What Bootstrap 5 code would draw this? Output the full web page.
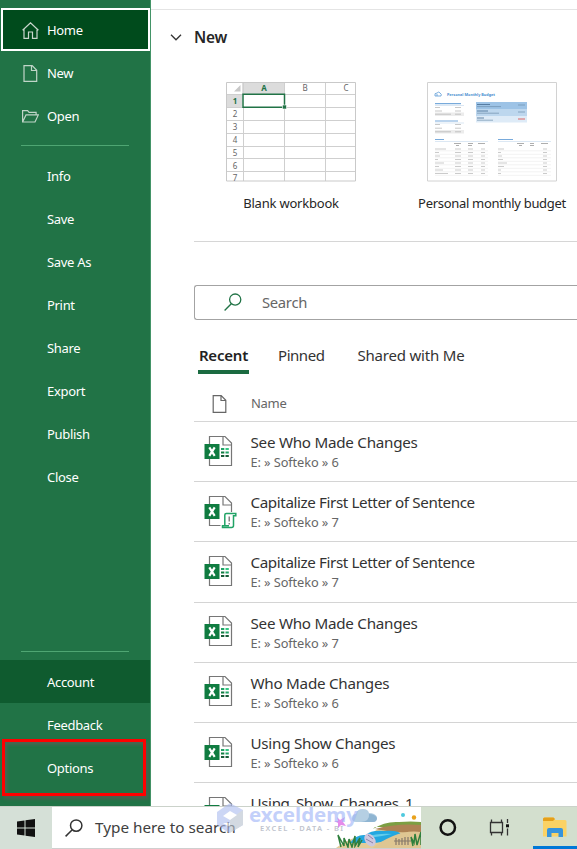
<!DOCTYPE html>
<html lang="en">
<head>
<meta charset="utf-8">
<meta name="viewport" content="width=device-width, initial-scale=1">
<title>Excel</title>
<link href="https://cdn.jsdelivr.net/npm/bootstrap@5.3.0/dist/css/bootstrap.min.css" rel="stylesheet">
<style>
body{font-family:"Noto Sans","Open Sans",sans-serif;color:#262626;height:849px;background:#fff}
.work{height:806px}
.side{width:151px;background:#217346;border-right:1px solid #439467;padding-top:8px;font-size:13px;letter-spacing:-.32px}
.side a{height:43px;color:#fff;text-decoration:none;padding:1px 0 0 22px}
.side .ico{width:17px;height:17px;margin:-1px 8px 0 0;flex:none}
.side a.home{background:#004b1c;border:2px solid #fff;margin-left:1px;padding-left:19px}
.side a.top{padding-top:2px}
.side a.sub{padding-left:47px}
.side a.low{padding-top:2px}
.side .last{margin-bottom:17px}
.rule{height:1px;margin:8px 21px;background:#4fa673;flex:none}
.rule.upper{margin-top:8px;margin-bottom:9px}
.side a.acct{background:#0f5b2f}
.callout{left:2px;top:739px;width:144px;height:57px;border:3px solid #f00;box-shadow:2px 3px 3px #4a5f50,inset 2px 3px 3px #4a6552;pointer-events:none}
.main{border-top:1px solid transparent;padding-left:43px}
.topline{height:1px;margin:8px 0 0 -43px;background:#e4e4e4}
.newhead{height:26px;margin:15px 0 0 -24px;font-size:15.4px;font-weight:600;letter-spacing:-.2px}
.newhead svg{margin:-2px 12px 0 0}
.tiles{margin-top:31px;padding-left:14px;height:160px;border-bottom:1px solid #d6d6d6}
.tile{width:202px;text-align:center;font-size:13px;letter-spacing:-.31px;white-space:nowrap;flex:none}
.tile.one{width:166px;margin-right:17px;letter-spacing:-.2px}
.tile .thumb{display:block;margin:0 auto}
.tile span{display:block;margin-top:12px;line-height:18px}
.find{height:35px;margin-top:43px;border:1px solid #a3a3a3;border-right:0;border-radius:3px 0 0 3px;padding-left:29px;font-size:14.8px;letter-spacing:-.3px;color:#666}
.find svg{margin:-2px 20px 0 0}
.tabs{margin-top:23px;height:31px;font-size:15px;line-height:25px;padding-left:4px;color:#333;letter-spacing:-.2px;white-space:nowrap}
.tabs .cur{font-weight:600;color:#222;border-bottom:4px solid #1b6b41;width:51px;text-align:center}
.t4{margin-left:29px;letter-spacing:-.45px}
.t5{margin-left:33px}
.namerow{height:48px;border-bottom:1px solid #d6d6d6;padding:13px 0 0 18px;font-size:13px;letter-spacing:-.3px;color:#666}
.namerow span{margin-left:24px}
.frow{height:60.2px;border-bottom:1px solid #d4d4d4;padding-left:10px;flex:none;white-space:nowrap}
.frow svg{flex:none;margin-right:12.500px}
.fname{font-size:15.2px;line-height:20px;color:#333;letter-spacing:-.26px;margin-top:1px}
.fname.tight{letter-spacing:-.39px}
.fpath{font-size:12.800px;line-height:20px;color:#666;letter-spacing:-.1px}
.bar{height:43px;background:#d3dfce;border-top:1px solid #cbd2ca}
.start{width:52px;background:#d5e0d7}
.tsearch{width:369px;background:#fff;font-size:15.3px;color:#404040;padding-left:13px;border-bottom:1px solid #cfcfcf;white-space:nowrap}
.t7{margin-left:12px}
.art{right:0;bottom:0}
.wm{left:216px;top:803px}
svg text{font-family:"Noto Sans",sans-serif;letter-spacing:0}
</style>
</head>
<body class="overflow-hidden position-relative">
<svg width="0" height="0" class="position-absolute">
<defs>
<symbol id="page" viewBox="0 0 14 18"><path d="M.7.700h8l4.600 4.600v12H.7zM8.500.7v4.800h4.800" fill="none" stroke="#666" stroke-width="1.200"/></symbol>
<symbol id="xl" viewBox="0 0 34 34"><path d="M5.500 1.500h15.500l6.500 6.500v22.500h-22z" fill="#fff" stroke="#767676" stroke-width="1.200"/><path d="M19 1.500v8.500h8.500" fill="none" stroke="#767676" stroke-width="1.200"/><path fill="#107c41" d="M.5 9h15v15H.5z"/><path d="M5.300 12.300l5.400 8.600M10.700 12.300l-5.400 8.600" stroke="#fff" stroke-width="2.200"/></symbol>
<symbol id="cells" viewBox="0 0 34 34"><path d="M17 13h3.300v2h-3.300z" fill="#21a366"/><path d="M21.500 13h3.300v2h-3.300z" fill="#33c481"/><path d="M17 16.500h3.300v2h-3.300z" fill="#107c41"/><path d="M21.500 16.500h3.300v2h-3.300z" fill="#21a366"/><path d="M17 20h3.300v2h-3.300zM21.500 20h3.300v2h-3.300z" fill="#185c37"/></symbol>
<symbol id="script" viewBox="0 0 34 34"><path d="M16.500 17h16.500v17H16.500z" fill="#fff"/><path d="M20.800 31V20q0-1.500 1.500-1.500h9.500v2.300h-2.300V30.500q0 2-2 2h-9v-1.700h6.500" fill="#fff" stroke="#21a366" stroke-width="1.500"/><path d="M25.200 21.500v5M25.200 28v1.500" stroke="#666" stroke-width="1.200"/></symbol>
</defs>
</svg>

<div class="work d-flex overflow-hidden">
<nav class="side d-flex flex-column flex-shrink-0">
<a href="#" class="home top d-flex align-items-center"><svg class="ico" viewBox="0 0 17 17" fill="none" stroke="#c9d6cd" stroke-width="1.200"><path d="M.6 8.300L8.500.8l7.900 7.500M2 7v9.300h4.500V10h4v6.300H15V7"/></svg>Home</a>
<a href="#" class="top d-flex align-items-center"><svg class="ico" viewBox="0 0 17 17" fill="none" stroke="#c0d5c8" stroke-width="1.200"><path d="M2 .6h8.200l4.500 4.700v11.100H2zM9.500.6v4.900h5"/></svg>New</a>
<a href="#" class="top d-flex align-items-center"><svg class="ico" viewBox="0 0 17 17" fill="none" stroke="#c0d5c8" stroke-width="1.200"><path d="M.6 14V2.600h5l1.500 1.700h7v2.600M.6 14L4 6.900h12.300L13 14z"/></svg>Open</a>
<div class="rule upper"></div>
<a href="#" class="sub d-flex align-items-center"><span>Info</span></a>
<a href="#" class="sub d-flex align-items-center"><span>Save</span></a>
<a href="#" class="sub d-flex align-items-center"><span>Save As</span></a>
<a href="#" class="sub d-flex align-items-center"><span>Print</span></a>
<a href="#" class="sub d-flex align-items-center"><span>Share</span></a>
<a href="#" class="sub d-flex align-items-center"><span>Export</span></a>
<a href="#" class="sub d-flex align-items-center"><span>Publish</span></a>
<a href="#" class="sub d-flex align-items-center"><span>Close</span></a>
<div class="rule mt-auto"></div>
<a href="#" class="sub low acct d-flex align-items-center"><span>Account</span></a>
<a href="#" class="sub low d-flex align-items-center"><span>Feedback</span></a>
<a href="#" class="sub low d-flex align-items-center last"><span>Options</span></a>
</nav>

<main class="main flex-grow-1 d-flex flex-column overflow-hidden">
<div class="topline flex-shrink-0"></div>
<div class="newhead d-flex align-items-center flex-shrink-0"><svg width="12" height="7" viewBox="0 0 12 7"><path d="M1 .8l5 5 5-5" fill="none" stroke="#333" stroke-width="1.300"/></svg>New</div>
<div class="tiles d-flex flex-shrink-0">
<div class="tile one">
<svg class="thumb" width="130" height="100" viewBox="0 0 130 100">
<path fill="#fff" d="M0 0h130v100H0z"/><path fill="#dcdcdc" d="M16 0h42v12H16zM0 12h16v13H0z"/>
<path d="M0 12.500h130M0 25.500h130M0 38.500h130M0 51.500h130M0 64.500h130M0 76.500h130M0 89.500h130M17.500 0v99M58.500 0v99M99.500 0v99" stroke="#cfcfcf" fill="none"/>
<path d="M.5.5h129v98.500H.500z" fill="none" stroke="#c9c9c9"/><path d="M14.500 3v6.500H8z" fill="#c8c8c8"/>
<path d="M17 12.200h41.500v13H17z" fill="#fff" stroke="#217346" stroke-width="1.500"/><path d="M56.500 23h4v4h-4z" fill="#217346" stroke="#fff" stroke-width=".6"/>
<g font-size="8" fill="#666" text-anchor="middle"><text x="38" y="9" font-weight="700" fill="#217346">A</text><text x="79" y="9">B</text><text x="120" y="9">C</text><text x="9" y="22" font-weight="700" fill="#217346">1</text><text x="9" y="35">2</text><text x="9" y="48">3</text><text x="9" y="61">4</text><text x="9" y="73.500">5</text><text x="9" y="86.500">6</text><text x="9" y="98.500">7</text></g>
</svg>
<span class="t1">Blank workbook</span></div>
<div class="tile">
<svg class="thumb" width="130" height="100" viewBox="0 0 130 100">
<path d="M.5.5h129v98.500H.500z" fill="#fff" stroke="#d2d2d2"/>
<path d="M8 14q-1-3 2-3 2-2 3 0 2 1 1 3zM10 14v-2" fill="none" stroke="#5b9bd5" stroke-width=".8"/>
<text x="20" y="14.300" font-size="4.200" font-weight="700" fill="#4a8fd0" textLength="48" lengthAdjust="spacingAndGlyphs">Personal Monthly Budget</text>
<path fill="#9dc3e6" d="M49 20h51v7H49z"/><path fill="#bdd7ee" d="M49 27h51v7H49z"/><path fill="#deebf7" d="M49 34h51v6.500H49z"/>
<path d="M50 22.500h13M50 29h11M50 36h7" stroke="#456b90" stroke-width=".8"/><path d="M50 24.600h24M50 31.200h22M50 38.200h16M91 23h7M91 30h7" stroke="#6f8fad" stroke-width=".7"/><path d="M91 37h7" stroke="#d66" stroke-width="1"/>
<path d="M8 21.600h26M8 39h23M8 57.500h9M71 57.500h15" stroke="#78aadb" stroke-width="1.200"/>
<path d="M8 23.500h29M8 41h29M8 59.500h53M71 59.500h53" stroke="#c5d9ed" stroke-width=".6"/>
<path fill="#ececec" d="M8 30.500h29v3.500H8zM8 48h29v3.500H8z"/>
<path d="M8 25.500h5m15 0h6M8 29h7m13 0h6M8 32.200h16m4 0h6M8 42.500h5m15 0h6M8 46.200h7m13 0h6M8 49.800h16m4 0h6" stroke="#b0b0b0" stroke-width=".7"/>
<path d="M27 61.500h7m7 0h5m5 0h7M29 63.500h3m9 0h4M90 61.500h7m6 0h4m7 0h7M92 63.500h3m8 0h4" stroke="#999" stroke-width=".8"/>
<path d="M8 67h11m9 0h6m7 0h5m8 0h4M71 67h6m39 0h4M8 70.500h4m16 0h6m7 0h5m8 0h4M71 70.500h3m42 0h4M8 74h5m15 0h6m7 0h5m8 0h4M71 74h4m41 0h4M8 77.500h3m17 0h6m7 0h5m8 0h4M71 77.500h5m40 0h4M8 81h9m11 0h6m7 0h5m8 0h4M71 81h9m36 0h4M8 84.500h4m16 0h6m7 0h5m8 0h4M71 84.500h6m39 0h4M8 88h8m12 0h6m7 0h5m8 0h4M71 88h3m42 0h4M8 91.500h13m7 0h6m7 0h5m8 0h4M71 91.500h3m42 0h4" stroke="#b5b5b5" stroke-width=".7"/>
<path d="M8 68.800h53m10 0h53M8 72.300h53m10 0h53M8 75.800h53m10 0h53M8 79.300h53m10 0h53M8 82.800h53m10 0h53M8 86.300h53m10 0h53M8 89.800h53m10 0h53M8 93.300h53m10 0h53" stroke="#e5e5e5" stroke-width=".5"/>
</svg>
<span class="t2">Personal monthly budget</span></div>
</div>
<div class="find d-flex align-items-center flex-shrink-0"><svg width="18" height="18" viewBox="0 0 18 18"><path d="M7.300 10.700L.6 17.400" stroke="#217346" stroke-width="1.400"/><circle cx="11.200" cy="6.600" r="5.600" fill="none" stroke="#217346" stroke-width="1.300"/></svg><span class="t3">Search</span></div>
<div class="tabs d-flex flex-shrink-0"><span class="cur">Recent</span><span class="t4">Pinned</span><span class="t5">Shared with Me</span></div>
<div class="namerow d-flex align-items-center flex-shrink-0"><svg width="15" height="18" class="flex-shrink-0"><use href="#page"/></svg><span class="t6">Name</span></div>
<div class="frow d-flex align-items-center"><svg width="34" height="34"><use href="#xl"/><use href="#cells"/></svg><div><div class="fname">See Who Made Changes</div><div class="fpath">E: » Softeko » 6</div></div></div>
<div class="frow d-flex align-items-center"><svg width="34" height="34"><use href="#xl"/><use href="#script"/></svg><div><div class="fname tight">Capitalize First Letter of Sentence</div><div class="fpath">E: » Softeko » 7</div></div></div>
<div class="frow d-flex align-items-center"><svg width="34" height="34"><use href="#xl"/><use href="#cells"/></svg><div><div class="fname tight">Capitalize First Letter of Sentence</div><div class="fpath">E: » Softeko » 7</div></div></div>
<div class="frow d-flex align-items-center"><svg width="34" height="34"><use href="#xl"/><use href="#cells"/></svg><div><div class="fname">See Who Made Changes</div><div class="fpath">E: » Softeko » 7</div></div></div>
<div class="frow d-flex align-items-center"><svg width="34" height="34"><use href="#xl"/><use href="#cells"/></svg><div><div class="fname">Who Made Changes</div><div class="fpath">E: » Softeko » 6</div></div></div>
<div class="frow d-flex align-items-center"><svg width="34" height="34"><use href="#xl"/><use href="#cells"/></svg><div><div class="fname">Using Show Changes</div><div class="fpath">E: » Softeko » 6</div></div></div>
<div class="frow d-flex align-items-center"><svg width="34" height="34"><use href="#xl"/><use href="#cells"/></svg><div><div class="fname tight">Using_Show_Changes_1</div><div class="fpath">E: » Softeko » 6</div></div></div>
</main>
</div>
<div class="callout position-absolute"></div>

<footer class="bar d-flex">
<div class="start d-flex align-items-center justify-content-center"><svg width="18" height="18" viewBox="0 0 18 18"><path d="M0 2.500L7.500 1.400V8.500H0zM8.500 1.200L18 0v8.500H8.500zM0 9.500h7.500v7.100L0 15.500zM8.500 9.500H18V18l-9.500-1.200z" fill="#111"/></svg></div>
<div class="tsearch d-flex align-items-center position-relative"><svg width="18" height="18" viewBox="0 0 18 18"><path d="M7 11L.6 17.400" stroke="#333" stroke-width="1.500"/><circle cx="11.200" cy="6.600" r="5.700" fill="none" stroke="#333" stroke-width="1.500"/></svg><span class="t7">Type here to search</span>
<svg class="art position-absolute" width="88" height="42" viewBox="0 0 88 42">
<path d="M23 16q-4 0-4-4 0-4 4-4 1-5 7-5 5 0 6 4 6 0 8 4 0 5-4 5z" fill="#b5cfe3"/><path d="M28 16q9-1 8-8 6 0 8 4 0 4-4 4z" fill="#8fb5d2"/>
<circle cx="70" cy="9" r="2" fill="#4fc9de"/><circle cx="81" cy="11.500" r="2.200" fill="#e9a21c"/>
<path d="M3 42Q16 31 38 28q12-10 28-11 12-1 22 0v25z" fill="#e3cc98"/><path d="M40 23q12-8 26-7 12-1 22 0v5H42z" fill="#7c9f43"/><path d="M42 23q22-6 46-4v8l-28-1z" fill="#ae8254"/>
<path d="M17 37q6-9 16-8 5-5 18-4 16-1 17 4 0 3-10 3-8 5-20 5z" fill="#23a7e0"/><path d="M33 31q12-4 26-3l-10 2-14 2z" fill="#62cdec"/>
<path d="M60 30q14-6 28-4v16H40q6-6 20-12z" fill="#dfc692"/>
<path d="M8 41L5 29l6 11v-8l4 9 1-8 3 8 3-11v10l5-8-2 9 4-7M80 40l-2-9 3 6 1-9 2 11 4-13v13" fill="none" stroke="#2f7f3d" stroke-width="1.500"/>
<path d="M63 32v7M66 33v6M69 32v7M72 31v8M75 31v8M61 35h17" stroke="#86786a" stroke-width="1.200"/>
<ellipse cx="37" cy="34" rx="5" ry="7" fill="#cdc7de" transform="rotate(-35 37 34)"/><path d="M35 29l5 4M33 33l7 4" stroke="#8c80a8"/><path d="M4 11l3 3 5-3-2 5 3 4-5-1-3 3v-5l-4-2h4z" fill="#e58ceb"/>
</svg></div>
<div class="d-flex align-items-center icons flex-grow-1">
<svg width="156" height="42" viewBox="0 0 156 42"><circle cx="26.800" cy="20.500" r="7.200" fill="none" stroke="#111" stroke-width="2.500"/>
<path d="M70.500 12.500v3M80.500 12.500v3M70.500 25.500v3M80.500 25.500v3M69.500 15.500h12v10h-12zM86.500 12v4M86.500 21.500v7" fill="none" stroke="#333" stroke-width="1.300"/><path d="M85 17.300h3v3h-3z" fill="#111"/>
<path d="M122 12q0-1.500 1.500-1.500h9l2 2.500H144q1.500 0 1.500 1.500v15h-23.500z" fill="#fbd264"/><path d="M122 14v-2q0-1.500 1.500-1.500h9l1.500 1.500-2 2z" fill="#e5a01b"/><path d="M126 30v-7q0-2 2-2h12q2 0 2 2v7h-4.500v-4h-7v4z" fill="#3794dc"/><path d="M112 39h44v3h-44z" fill="#0078d7"/></svg>
</div>
</footer>
<svg class="wm position-absolute" width="146" height="34" viewBox="0 0 146 34">
<g opacity=".62"><path d="M1 9L14 0l13 7v15l-14 8L1 22z" fill="#aebdf0"/><path d="M14 30V16l13-9v15z" fill="#b9c3cf"/><path d="M7 13l7-5 7 4-7 5zM7 20h7v4z" fill="#fff"/>
<text x="33" y="19" font-size="19" font-weight="700" fill="#9fb4f7" textLength="109" lengthAdjust="spacingAndGlyphs">exceldemy</text><text x="44" y="27.500" font-size="7.500" font-weight="600" fill="#9a9fb0" textLength="83">EXCEL - DATA - BI</text></g></svg>
<script src="https://cdn.jsdelivr.net/npm/bootstrap@5.3.0/dist/js/bootstrap.bundle.min.js"></script>
</body>
</html>
